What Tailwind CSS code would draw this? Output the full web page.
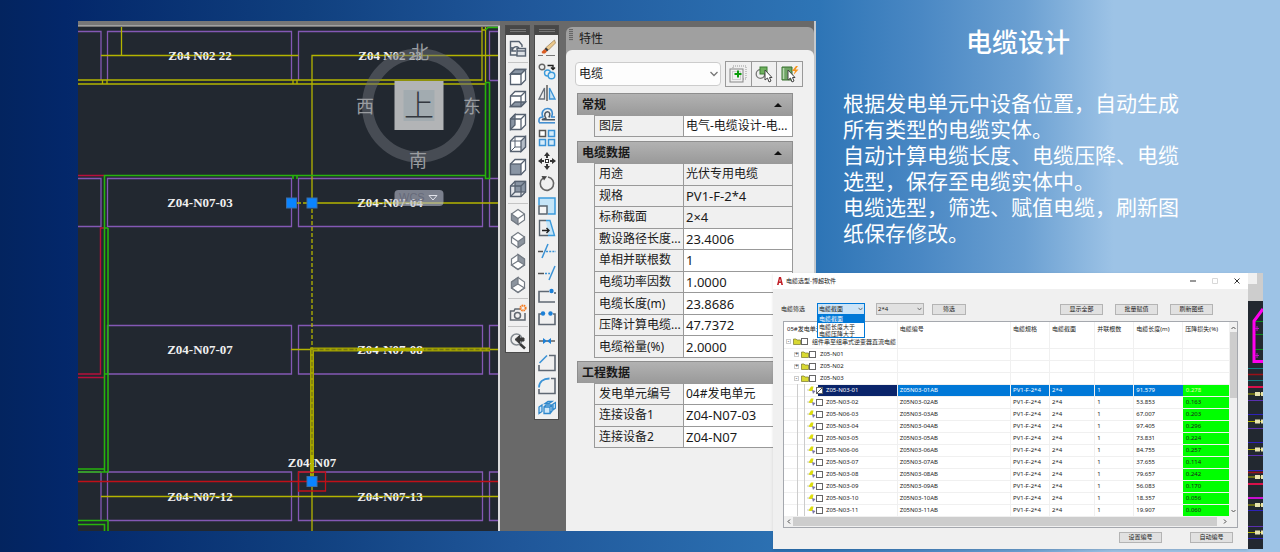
<!DOCTYPE html>
<html lang="zh-CN">
<head>
    <meta charset="UTF-8">
    <meta name="viewport" content="width=device-width, initial-scale=1.0">
    <title>电缆设计</title>
    <script src="https://cdn.jsdelivr.net/npm/@tailwindcss/browser@4"></script>
</head>
<body class="font-['Noto_Sans','Noto_Sans_CJK_SC',sans-serif] text-[#1a1a1a]">
    <main class="relative min-h-screen overflow-hidden flex pl-[78px] pt-[21px] bg-[linear-gradient(90deg,#03245f_0%,#03276a_5%,#10407f_24%,#1f5699_40%,#2e75b6_64%,#4a88c4_72%,#6ba0d2_80%,#9dc3e6_87%)]">

        <!-- CAD window -->
        <section class="shrink-0 w-[738px] h-[510px] flex bg-[#696969] border-r-2 border-[#c4c8cc]">
            <svg class="shrink-0 w-[422px] h-[510px]" viewBox="78 21 422 510" role="img" aria-label="CAD">
                <rect x="78" y="21" width="422" height="6" fill="#777"/>
                <rect x="78" y="25" width="422" height="1" fill="#a0a0a0"/>
                <rect x="78" y="27" width="420" height="504" fill="#222830"/>
                <rect x="498" y="26" width="2" height="505" fill="#dcdcdc"/>
                <!-- panel outlines -->
                <g fill="none" stroke="#8458b4" stroke-width="1.3">
                    <path d="M78 31.5H101V80M107.5 80V31.5H291.5V80M298.5 80V31.5H482M489.5 80V31.5H498M489.5 80.500H498"/>
                    <path d="M78 178.500H101V226.500H78M107.500 178.500H291.500V226.500H107.500ZM298.500 178.500H482.500V226.500H298.500ZM498 178.500H489.500V226.500H498"/>
                    <path d="M107.500 325.500H291.500V374H107.500ZM298.500 325.500H482.500V374H298.500ZM498 325.500H489.500V374H498"/>
                    <path d="M101 472V520.500M78 472H101M107.500 472H291.500V520.500H107.500ZM298.500 472H482.500V520.500H298.500ZM498 472H489.500V520.500H498"/>
                </g>
                <!-- cable trays -->
                <g fill="none" stroke="#b4b400" stroke-width="1.3">
                    <path d="M78 80H482V27M78 84H485.500V27M102.500 80V84M107 80V84M293 80V84M297 80V84M482 30H486"/>
                    <path d="M121.500 27V55.500M101 55.500H298.500M498 55.500H312V203H498"/>
                    <path d="M291 203H312" stroke-dasharray="4 2"/>
                    <path d="M312 203V350" stroke-dasharray="4 2"/>
                    <path d="M291 349.500H498M312 350V531M101 496.500H498"/>
                    <path d="M312 480V349.500H490" stroke-width="4" stroke="#a3a300"/>
                    <path d="M312 480V349.500H490" stroke-dasharray="4 2" stroke="#777712"/>
                </g>
                <g fill="none" stroke="#b80f3b" stroke-width="1.400">
                    <path d="M78 175.500H104M104 228H100.500V374H78M78 377.500H104"/>
                </g>
                <g fill="none" stroke="#27b30c" stroke-width="1.600">
                    <path d="M104.500 472V175.500H486M108 228V472H78M104 228H108M78 469H104.500M293 175V179M297 175V179M104 374H108"/>
                    <path d="M78 520.500H108V531M78 524.500H104.500V531M498 27.500H488L485.500 30M485.500 83V178.500H489.500V82.500H485"/>
                </g>
                <path d="M78 481.500H498M298.500 472H325.500V491H298.500Z" fill="none" stroke="#c01018" stroke-width="1.300"/>
                <!-- panel numbers -->
                <g class="font-['Liberation_Serif',serif] text-[13px] font-bold" fill="#f0f0f0" text-anchor="middle">
                    <text x="200" y="60">Z04 N02 22</text>
                    <text x="390" y="60">Z04 N02 23</text>
                    <text x="200" y="207">Z04-N07-03</text>
                    <text x="390" y="207">Z04-N07-04</text>
                    <text x="200" y="354">Z04-N07-07</text>
                    <text x="390" y="354">Z04-N07-08</text>
                    <text x="200" y="501">Z04-N07-12</text>
                    <text x="390" y="501">Z04-N07-13</text>
                    <text x="312" y="467">Z04-N07</text>
                </g>
                <g fill="none" stroke="#b4b400">
                    <path d="M166 55.500H234M357 55.500H424M357 203H424M166 496.500H234M357 496.500H424" opacity=".45"/>
                    <path d="M357 349.500H424" stroke-width="3"/>
                    <path d="M312 455V472" stroke-width="3"/>
                </g>
                <!-- grips -->
                <g fill="#0a84ff" stroke="#3b6ea8">
                    <rect x="286.500" y="198" width="10" height="10"/>
                    <rect x="307" y="198" width="10" height="10"/>
                    <rect x="307" y="476.500" width="10" height="10"/>
                </g>
                <!-- view cube -->
                <circle cx="419" cy="105.500" r="51.500" fill="none" stroke="#6b7077" stroke-opacity=".5" stroke-width="11"/>
                <rect x="394.500" y="81" width="49" height="49" fill="#b2b4b6"/>
                <rect x="403.500" y="90" width="31" height="31" fill="#a2abb0"/>
                <g class="font-['Noto_Sans_CJK_SC',sans-serif] text-[18px]" fill="#9a9da1" text-anchor="middle">
                    <text x="420" y="59">北</text>
                    <text x="418" y="167">南</text>
                    <text x="365" y="113">西</text>
                    <text x="472" y="113">东</text>
                    <text class="text-[30px] font-light" x="419" y="116" fill="#33383f">上</text>
                </g>
                <rect x="394.500" y="190" width="49" height="16" rx="4" fill="#b8bacb" fill-opacity=".6"/>
                <text class="font-['Liberation_Sans',sans-serif] text-[11px]" x="399" y="201" fill="#666a7a">WCS</text>
                <path d="M429 195.500H437L433 200Z" fill="none" stroke="#e2e3ea"/>
            </svg>

            <!-- Toolbars -->
            <div class="shrink-0 w-[66px] flex items-start gap-1 pt-1 pl-[5px]">
                <div class="w-[25px] h-[328px] bg-[#f0f0f0] border border-[#4a4a4a] flex flex-col items-center justify-between pb-[2px]">
                    <div class="w-full h-[9px] bg-[#474747] flex flex-col items-center justify-center gap-px">
                        <span class="w-4 h-px bg-[#777]"></span><span class="w-4 h-px bg-[#777]"></span>
                    </div>
                    <button aria-label="视图管理器"><svg class="w-[18px] h-[18px]" viewBox="0 0 18 18" fill="none" stroke="#566170" stroke-width="1.400"><path d="M8 15H1.500V1.500H10L13 5V7M3 11C4 6 8 6 10 8M3 7V11H7"/><rect x="8" y="8.500" width="8.500" height="7.500" fill="#dde1e6"/><path d="M8 11H16.500"/></svg></button>
                    <hr class="w-5 border-[#c4c4c4]">
                    <button aria-label="俯视"><svg class="w-[18px] h-[18px]" viewBox="0 0 18 18" fill="#fff" stroke="#566170" stroke-width="1.300"><path d="M1.500 6L6 1.500H16.500V12L12 16.500H1.500Z"/><path d="M1.500 6L6 1.500H16.500L12 6Z" fill="#8995a4"/><path d="M12 6V16.500M1.500 6H12" fill="none"/></svg></button>
                    <button aria-label="仰视"><svg class="w-[18px] h-[18px]" viewBox="0 0 18 18" fill="#fff" stroke="#566170" stroke-width="1.300"><path d="M1.500 6L6 1.500H16.500V12L12 16.500H1.500Z"/><path d="M1.500 16.500L6 12H16.500L12 16.500Z" fill="#8995a4"/><path d="M12 16.500V6H1.500M12 6L16.500 1.500" fill="none"/></svg></button>
                    <button aria-label="左视"><svg class="w-[18px] h-[18px]" viewBox="0 0 18 18" fill="#fff" stroke="#566170" stroke-width="1.300"><path d="M1.500 6L6 1.500H16.500V12L12 16.500H1.500Z"/><path d="M1.500 6L6 1.500V12L1.500 16.500Z" fill="#8995a4"/><path d="M12 16.500V6H1.500M12 6L16.500 1.500" fill="none"/></svg></button>
                    <button aria-label="右视"><svg class="w-[18px] h-[18px]" viewBox="0 0 18 18" fill="#fff" stroke="#566170" stroke-width="1.300"><path d="M1.500 6L6 1.500H16.500V12L12 16.500H1.500Z"/><path d="M12 6L16.500 1.500V12L12 16.500Z" fill="#b4bcc6"/><path d="M12 6H1.500M6 2V12L2 16M6 12H12" fill="none" stroke-width="1"/></svg></button>
                    <button aria-label="前视"><svg class="w-[18px] h-[18px]" viewBox="0 0 18 18" fill="#fff" stroke="#566170" stroke-width="1.300"><path d="M1.500 6L6 1.500H16.500V12L12 16.500H1.500Z"/><rect x="1.500" y="6" width="10.500" height="10.500" fill="#8995a4"/><path d="M12 6L16.500 1.500"/></svg></button>
                    <button aria-label="后视"><svg class="w-[18px] h-[18px]" viewBox="0 0 18 18" fill="#e4e7eb" stroke="#566170" stroke-width="1.300"><path d="M1.500 6L6 1.500H16.500V12L12 16.500H1.500Z"/><rect x="6" y="1.500" width="10.500" height="10.500" fill="#8995a4"/><path d="M1.500 6H12V16.500M12 6L16.500 1.500M1.500 16.500L6 12" fill="none"/></svg></button>
                    <hr class="w-5 border-[#c4c4c4]">
                    <button aria-label="西南等轴测"><svg class="w-[18px] h-[18px]" viewBox="0 0 18 18" fill="#fff" stroke="#747b84" stroke-width="1.200"><path d="M2.500 6L9 1.500L15.500 6V12L9 16.500L2.500 12Z"/><path d="M2.500 6L9 10.500V16.500L2.500 12Z" fill="#8c949e"/><path d="M9 10.500L15.500 6"/></svg></button>
                    <button aria-label="东南等轴测"><svg class="w-[18px] h-[18px]" viewBox="0 0 18 18" fill="#fff" stroke="#747b84" stroke-width="1.200"><path d="M2.500 6L9 1.500L15.500 6V12L9 16.500L2.500 12Z"/><path d="M15.500 6L9 10.500V16.500L15.500 12Z" fill="#8c949e"/><path d="M9 10.500L2.500 6"/></svg></button>
                    <button aria-label="东北等轴测"><svg class="w-[18px] h-[18px]" viewBox="0 0 18 18" fill="#fff" stroke="#747b84" stroke-width="1.200"><path d="M2.500 6L9 1.500L15.500 6V12L9 16.500L2.500 12Z"/><path d="M9 1.500L15.500 6V12L9 8Z" fill="#8c949e"/><path d="M9 8L2.500 12L9 16.500L15.500 12" fill="none"/></svg></button>
                    <button aria-label="西北等轴测"><svg class="w-[18px] h-[18px]" viewBox="0 0 18 18" fill="#fff" stroke="#747b84" stroke-width="1.200"><path d="M2.500 6L9 1.500L15.500 6V12L9 16.500L2.500 12Z"/><path d="M9 1.500L2.500 6V12L9 8Z" fill="#8c949e"/><path d="M9 8L15.500 12L9 16.500L2.500 12" fill="none"/></svg></button>
                    <hr class="w-5 border-[#c4c4c4]">
                    <button aria-label="创建相机"><svg class="w-[18px] h-[18px]" viewBox="0 0 18 18" fill="none" stroke="#606870" stroke-width="1.500"><path d="M11 5H6L5 7H1.500V16H16V9"/><circle cx="8.500" cy="11.500" r="3"/><circle cx="14" cy="4" r="2.600" stroke="#f47b20" stroke-width="2" stroke-dasharray="1.500 .6"/></svg></button>
                    <hr class="w-5 border-[#c4c4c4]">
                    <button aria-label="上一个视图"><svg class="w-[18px] h-[18px]" viewBox="0 0 18 18" fill="none" stroke="#3a3a3a"><circle cx="7.500" cy="7.500" r="5.500" stroke="#858b91" stroke-width="1.500"/><path d="M11 12L16 16.500" stroke-width="2.600"/><path d="M6 7.500L10.500 3.500V6H15V9H10.500V11.500Z" fill="#3a3a3a"/></svg></button>
                </div>
                <div class="w-[25px] h-[395px] bg-[#f0f0f0] border border-[#4a4a4a] flex flex-col items-center justify-between pb-[2px]">
                    <div class="w-full h-[9px] bg-[#474747] flex flex-col items-center justify-center gap-px">
                        <span class="w-4 h-px bg-[#777]"></span><span class="w-4 h-px bg-[#777]"></span>
                    </div>
                    <button aria-label="删除"><svg class="w-[18px] h-[18px]" viewBox="0 0 18 18"><path d="M16.500 1L8 8.500L10.500 11L17.500 4Z" fill="#ecc98c" stroke="#8a6d45" stroke-width=".6"/><path d="M8 8.500L10.500 11L9 12.500L6.500 10Z" fill="#333"/><path d="M6.500 10L9 12.500L7 14.500H4.500L3.500 13Z" fill="#d95b22"/><path d="M0 16.500H5M8 16.500H17" stroke="#777"/></svg></button>
                    <button aria-label="复制"><svg class="w-[18px] h-[18px]" viewBox="0 0 18 18" fill="none" stroke-width="1.400"><circle cx="4" cy="5" r="2.800" stroke="#666"/><path d="M9.500 3.500H15V7M13 5.500L15 7.500L17 5.500" stroke="#222"/><circle cx="9.500" cy="11" r="3" stroke="#3b9bdc"/><circle cx="13.500" cy="13.500" r="3.300" stroke="#3b9bdc" fill="#d5ecfa"/></svg></button>
                    <button aria-label="镜像"><svg class="w-[18px] h-[18px]" viewBox="0 0 18 18" fill="none" stroke-width="1.300"><path d="M6.500 4V15H1Z" stroke="#666e78"/><path d="M9 1V17" stroke="#444"/><path d="M11.500 4V15H17Z" stroke="#3b93d6" fill="#c5e2f5"/></svg></button>
                    <button aria-label="偏移"><svg class="w-[18px] h-[18px]" viewBox="0 0 18 18" fill="none" stroke-linejoin="round"><path d="M1 15.500V13C1 11 3 10 5 10C2.500 5 6 1.500 9.500 1.500C14 1.500 15.500 6 13.500 10H17" stroke="#3b8bd0" stroke-width="1.600"/><path d="M17 12.800H4.500C4 11.500 6 12.500 8 11.500C5.500 8 7 4.800 9.500 4.800C12 4.800 12.500 8 10.800 10.500" stroke="#4a5560" stroke-width="1.500"/><path d="M1 15.800H17" stroke="#3b8bd0" stroke-width="1.500"/></svg></button>
                    <button aria-label="阵列"><svg class="w-[18px] h-[18px]" viewBox="0 0 18 18" fill="#d6ecfa" stroke="#3b93d6" stroke-width="1.500"><rect x="1.500" y="1.500" width="6" height="6" fill="#fff" stroke="#555"/><rect x="10.500" y="1.500" width="6" height="6"/><rect x="1.500" y="10.500" width="6" height="6"/><rect x="10.500" y="10.500" width="6" height="6"/></svg></button>
                    <button aria-label="移动"><svg class="w-[18px] h-[18px]" viewBox="0 0 18 18" fill="#333"><path d="M9 0L12 4H10V6H8V4H6ZM9 18L12 14H10V12H8V14H6ZM0 9L4 6V8H6V10H4V12ZM18 9L14 6V8H12V10H14V12Z"/><rect x="7.500" y="7.500" width="3" height="3" fill="#fff" stroke="#333"/></svg></button>
                    <button aria-label="旋转"><svg class="w-[18px] h-[18px]" viewBox="0 0 18 18" fill="none" stroke="#666" stroke-width="1.600"><path d="M5 4.200A6.700 6.700 0 1 0 10 3"/><path d="M3.500 2L9 2.200L6 6.500Z" fill="#444" stroke="none"/></svg></button>
                    <button aria-label="缩放"><svg class="w-[18px] h-[18px]" viewBox="0 0 18 18" stroke-width="1.500"><path d="M1 8V1H17V17H10" fill="#c5e5f8" stroke="#3b9bdc"/><rect x="1" y="9" width="8" height="8" fill="#f5f5f5" stroke="#5a646e"/></svg></button>
                    <button aria-label="拉伸"><svg class="w-[18px] h-[18px]" viewBox="0 0 18 18" stroke-width="1.400"><path d="M8 1.500H12L16.500 16.500H10" fill="#c5e5f8" stroke="#3b9bdc"/><path d="M8 1.500H1.500V16.500H10" fill="none" stroke="#5a646e"/><path d="M4 11.500H11M8.500 9L11 11.500L8.500 14" fill="none" stroke="#222"/></svg></button>
                    <button aria-label="修剪"><svg class="w-[18px] h-[18px]" viewBox="0 0 18 18" fill="none" stroke-width="1.500"><path d="M0 9.500H5" stroke="#555"/><path d="M4 16L10 2" stroke="#3b93d6"/><path d="M8 9.500H18" stroke="#3b93d6" stroke-dasharray="2 1.200"/></svg></button>
                    <button aria-label="延伸"><svg class="w-[18px] h-[18px]" viewBox="0 0 18 18" fill="none" stroke-width="1.500"><path d="M0 9.500H6" stroke="#555"/><path d="M11 16L17 2" stroke="#3b93d6"/><path d="M7 9.500H12" stroke="#3b93d6" stroke-dasharray="2 1.200"/></svg></button>
                    <button aria-label="打断于点"><svg class="w-[18px] h-[18px]" viewBox="0 0 18 18" fill="none" stroke="#5f6873" stroke-width="1.600"><path d="M11 4.500H1V15H17M17 7V5"/><circle cx="13.500" cy="4" r="2.200" fill="#1b7fd6" stroke="none"/></svg></button>
                    <button aria-label="打断"><svg class="w-[18px] h-[18px]" viewBox="0 0 18 18" fill="none" stroke="#5f6873" stroke-width="1.600"><path d="M3 5H1V15.500H17V5H15"/><circle cx="5" cy="4.500" r="2.200" fill="#1b7fd6" stroke="none"/><circle cx="12.500" cy="4.500" r="2.200" fill="#1b7fd6" stroke="none"/></svg></button>
                    <button aria-label="合并"><svg class="w-[18px] h-[18px]" viewBox="0 0 18 18"><path d="M1 9H17" stroke="#555" stroke-width="1.400"/><path d="M5 6L9 9L5 12ZM13 6L9 9L13 12Z" fill="#1b7fd6"/></svg></button>
                    <button aria-label="倒角"><svg class="w-[18px] h-[18px]" viewBox="0 0 18 18" fill="none" stroke="#5f6873" stroke-width="1.600"><path d="M1 11V16.500H17V1.500H11"/><path d="M1.500 9L9 1.500" stroke="#3b93d6"/></svg></button>
                    <button aria-label="圆角"><svg class="w-[18px] h-[18px]" viewBox="0 0 18 18" fill="none" stroke="#5f6873" stroke-width="1.600"><path d="M1 12V16.500H17V1.500H13"/><path d="M1 10.500C1 5 5 1.500 11.500 1.500" stroke="#3b93d6" stroke-width="1.800"/></svg></button>
                    <button aria-label="分解"><svg class="w-[18px] h-[18px]" viewBox="0 0 18 18" fill="#cfe7f8" stroke="#2f88cc" stroke-width="1.300"><path d="M6 8H12V14.500H6ZM6 8L8 6H14L12 8M14 6V12L12 14.500"/><path d="M1 8L4 6V12.500L1 14.500ZM7 4.500L10 2.500H14L11 4.500ZM15 5L17.500 3.500V9L15 11Z"/></svg></button>
                </div>
            </div>

            <!-- Properties palette -->
            <aside class="grow mt-[6px] bg-[#a0a0a0] rounded-t-md">
                <h2 class="h-[23px] flex items-center gap-[6px] pl-[3px] text-[12px]">
                    <span class="w-1 h-3 self-start mt-[2px] bg-[repeating-linear-gradient(#666_0_1px,#999_1px_2px)]"></span>特性
                </h2>
                <div class="h-[481px] bg-[#f0f0f0] rounded-t-md pt-[11px] pl-[9px]">
                    <div class="flex items-center gap-1 mb-[6px]">
                        <div class="relative">
                            <select aria-label="对象类型" class="block appearance-none w-[146px] h-6 bg-[#fdfdfd] border border-[#ccc] rounded-sm pl-[3px] text-[12px]"><option>电缆</option></select>
                            <svg class="absolute right-[3px] top-[9px] w-2 h-[6px]" viewBox="0 0 8 6" fill="none" stroke="#777" stroke-width="1.300"><path d="M.5 1L4 4.500L7.500 1"/></svg>
                        </div>
                        <div class="flex h-[26px] w-[78px] border border-[#999] divide-x divide-[#999]">
                            <button class="grow grid place-items-center" aria-label="切换 PICKADD"><svg class="w-[18px] h-[18px]" viewBox="0 0 18 18" fill="none"><rect x="4" y="1" width="13" height="13" stroke="#999" stroke-dasharray="1 1"/><rect x="1" y="4" width="13" height="13" fill="#f0f0f0" stroke="#888"/><rect x="3.500" y="6.500" width="8" height="8" stroke="#aaa" stroke-dasharray="1 1"/><path d="M9 5.500V12.500M5.500 9H12.500" stroke="#0a9c0a" stroke-width="2"/></svg></button>
                            <button class="grow grid place-items-center" aria-label="选择对象"><svg class="w-[18px] h-[18px]" viewBox="0 0 18 18"><circle cx="5.500" cy="9" r="4.300" fill="none" stroke="#777" stroke-width="1.300"/><rect x="5" y="2" width="7" height="7" fill="#6fb05e" stroke="#3b7d33"/><path d="M10 5V15L12.500 13L14 17L16 16L14.500 12.500H17Z" fill="#fff" stroke="#444"/></svg></button>
                            <button class="grow grid place-items-center" aria-label="快速选择"><svg class="w-[18px] h-[18px]" viewBox="0 0 18 18"><path d="M1 2H11V15H1Z" fill="#6fa565" stroke="#38702f"/><path d="M2.500 3V14" stroke="#b9d8b2" stroke-width="1.500"/><path d="M7 5V15L9.500 13L11 17L13 16L11.500 12.500H14Z" fill="#fff" stroke="#444"/><path d="M15 1L11 6H14L12.500 10L17.500 4.500H14.500L17 1Z" fill="#f7941d"/></svg></button>
                        </div>
                    </div>
                    <div class="w-[216px] ml-[2px]">
                        <h3 class="h-[22px] flex items-center justify-between pl-1 pr-[10px] text-[12px] font-bold border border-b-0 border-[#8e8e8e] bg-linear-to-b from-[#b2b2b2] to-[#9a9a9a]">常规<svg class="w-2 h-1" viewBox="0 0 8 4"><path d="M0 4L4 0L8 4Z" fill="#111"/></svg></h3>
                        <table class="table-fixed w-[199px] h-[22px] ml-[17px] mb-1 border-collapse text-[12px] leading-4 whitespace-nowrap">
                            <tbody id="general"></tbody>
                        </table>
                        <h3 class="h-[22px] flex items-center justify-between pl-1 pr-[10px] text-[12px] font-bold border border-b-0 border-[#8e8e8e] bg-linear-to-b from-[#b2b2b2] to-[#9a9a9a]">电缆数据<svg class="w-2 h-1" viewBox="0 0 8 4"><path d="M0 4L4 0L8 4Z" fill="#111"/></svg></h3>
                        <table class="table-fixed w-[199px] h-[195px] ml-[17px] mb-[3px] border-collapse text-[12px] leading-4 whitespace-nowrap">
                            <tbody id="cable"></tbody>
                        </table>
                        <h3 class="h-[22px] flex items-center justify-between pl-1 pr-[10px] text-[12px] font-bold border border-b-0 border-[#8e8e8e] bg-linear-to-b from-[#b2b2b2] to-[#9a9a9a]">工程数据<svg class="w-2 h-1" viewBox="0 0 8 4"><path d="M0 4L4 0L8 4Z" fill="#111"/></svg></h3>
                        <table class="table-fixed w-[199px] h-[65px] ml-[17px] border-collapse text-[12px] leading-4 whitespace-nowrap">
                            <tbody id="project"></tbody>
                        </table>
                    </div>
                </div>
            </aside>
        </section>

        <!-- Description -->
        <article class="grow pl-[27px] pt-1 text-white font-['Noto_Sans_CJK_SC',sans-serif]">
            <h1 class="w-[350px] text-center text-[26px] leading-[32px] font-medium mb-8">电缆设计</h1>
            <div class="w-[344px] text-[21px] leading-[26px]">
                <p>根据发电单元中设备位置，自动生成所有类型的电缆实体。</p>
                <p>自动计算电缆长度、电缆压降、电缆选型，保存至电缆实体中。</p>
                <p>电缆选型，筛选、赋值电缆，刷新图纸保存修改。</p>
            </div>
        </article>

        <!-- Cable selection window, floating over the drawing -->
        <div class="absolute left-[773px] top-[273px] flex text-[6px] leading-[8px]">
            <section class="w-[475px] h-[276px] bg-[#f0f0f0] shadow-sm">
                <header class="h-4 bg-white flex items-center pl-1 pr-2 gap-[3px]">
                    <svg class="w-[6px] h-2" viewBox="0 0 6 8"><path d="M0 8L2 0H4L6 8H4.300L4 6H2L1.700 8ZM2.300 4.500H3.700L3 1.800Z" fill="#c01c24"/></svg>
                    <h2 class="grow">电缆选型-博超软件</h2>
                    <div class="flex items-center gap-4">
                        <button aria-label="最小化"><svg class="w-[6px] h-[6px]" viewBox="0 0 6 6"><path d="M0 3H6" stroke="#333"/></svg></button>
                        <button aria-label="最大化"><svg class="w-[6px] h-[6px]" viewBox="0 0 6 6"><path d="M.5 .5H5.500V5.500H.5Z" fill="none" stroke="#d8d8d8"/></svg></button>
                        <button aria-label="关闭"><svg class="w-[6px] h-[6px]" viewBox="0 0 6 6"><path d="M.5 .5L5.500 5.500M5.500 .5L.5 5.500" stroke="#333"/></svg></button>
                    </div>
                </header>
                <div class="flex items-center h-[32px] pl-2 pr-[35px] pt-2">
                    <label for="filterBy" class="w-9">电缆筛选</label>
                    <div class="relative mr-[11px] text-[6px]">
                        <select id="filterBy" class="block appearance-none w-12 h-3 bg-[#cce4f7] border border-[#0078d7] pl-px"><option>电缆截面</option><option>电缆长度大于</option><option>电缆压降大于</option></select>
                        <svg class="absolute right-[2px] top-1 w-[5px] h-1" viewBox="0 0 5 4" fill="none" stroke="#555" stroke-width=".8"><path d="M.5 .8L2.500 3L4.500 .8"/></svg>
                        <ul class="absolute z-10 top-[11px] left-0 w-12 bg-white border border-[#0078d7]">
                            <li class="h-2 pl-px bg-[#0078d7] text-white">电缆截面</li>
                            <li class="h-[7px] pl-px">电缆长度大于</li>
                            <li class="h-[7px] pl-px">电缆压降大于</li>
                        </ul>
                    </div>
                    <div class="relative mr-2">
                        <select aria-label="截面" class="block appearance-none w-12 h-3 bg-[#e1e1e1] border border-[#b4b4b4] pl-px"><option>2*4</option></select>
                        <svg class="absolute right-[2px] top-1 w-[5px] h-1" viewBox="0 0 5 4" fill="none" stroke="#555" stroke-width=".8"><path d="M.5 .8L2.500 3L4.500 .8"/></svg>
                    </div>
                    <button class="w-[34px] h-[11px] bg-[#e1e1e1] border border-[#b4b4b4]">筛选</button>
                    <div class="ml-auto flex gap-3">
                        <button class="w-[43px] h-[11px] bg-[#e1e1e1] border border-[#b4b4b4]">显示全部</button>
                        <button class="w-[43px] h-[11px] bg-[#e1e1e1] border border-[#b4b4b4]">批量赋值</button>
                        <button class="w-[43px] h-[11px] bg-[#e1e1e1] border border-[#b4b4b4]">刷新图纸</button>
                    </div>
                </div>
                <div class="mx-[10px] bg-white border border-[#a5a8ae]">
                    <div class="flex">
                        <table class="table-fixed grow w-[444px] border-collapse text-left whitespace-nowrap">
                            <colgroup><col class="w-[113px]"><col class="w-[113px]"><col class="w-[39px]"><col class="w-[45px]"><col class="w-[39px]"><col class="w-[49px]"><col class="w-[46px]"></colgroup>
                            <thead>
                                <tr class="h-[14px]">
                                    <th class="p-0 pl-[3px] font-normal">05#发电单元</th>
                                    <th class="p-0 pl-[2px] font-normal border-l border-[#f0f0f0]">电缆编号</th>
                                    <th class="p-0 pl-[2px] font-normal border-l border-[#f0f0f0]">电缆规格</th>
                                    <th class="p-0 pl-[2px] font-normal border-l border-[#f0f0f0]">电缆截面</th>
                                    <th class="p-0 pl-[2px] font-normal border-l border-[#f0f0f0]">并联根数</th>
                                    <th class="p-0 pl-[2px] font-normal border-l border-[#f0f0f0]">电缆长度(m)</th>
                                    <th class="p-0 pl-[2px] font-normal border-l border-[#f0f0f0]">压降损失(%)</th>
                                </tr>
                            </thead>
                            <tbody id="cables"></tbody>
                        </table>
                        <div class="w-2 bg-[#f0f0f0] flex flex-col items-center py-1">
                            <svg class="w-[5px] h-1" viewBox="0 0 5 4" fill="none" stroke="#555"><path d="M.5 3L2.500 1L4.500 3"/></svg>
                            <div class="w-[7px] h-[66px] mt-[2px] bg-[#cdcdcd]"></div>
                            <svg class="w-[5px] h-1 mt-auto" viewBox="0 0 5 4" fill="none" stroke="#555"><path d="M.5 1L2.500 3L4.500 1"/></svg>
                        </div>
                    </div>
                    <div class="h-[10px] bg-[#f0f0f0] flex items-center pl-[3px] pr-[10px]">
                        <svg class="w-1 h-[5px] mr-[2px]" viewBox="0 0 4 5" fill="none" stroke="#444"><path d="M3 .5L1 2.500L3 4.500"/></svg>
                        <div class="grow h-[9px] bg-[#cdcdcd]"></div>
                        <svg class="w-1 h-[5px] ml-[6px]" viewBox="0 0 4 5" fill="none" stroke="#444"><path d="M1 .5L3 2.500L1 4.500"/></svg>
                    </div>
                </div>
                <footer class="flex justify-end gap-7 pt-1 pr-[15px]">
                    <button class="w-[43px] h-[11px] bg-[#e1e1e1] border border-[#b4b4b4]">设置编号</button>
                    <button class="w-[43px] h-[11px] bg-[#e1e1e1] border border-[#b4b4b4]">自动编号</button>
                </footer>
            </section>
            <svg class="w-[15px] h-[276px]" viewBox="1248 273 15 276" fill="none">
                <rect x="1248" y="273" width="15" height="276" fill="#222830"/>
                <rect x="1248" y="273" width="15" height="28" fill="#cdcdcd"/>
                <rect x="1248" y="273" width="9" height="11" fill="#f0f0f0"/>
                <path d="M1254 321.500H1263M1254 334.500H1263M1254 349.500H1263" stroke="#0c8a1c"/>
                <path d="M1263 309L1254 321V361.500H1263" stroke="#f0e" stroke-width="3"/>
                <path d="M1255 328.500H1259M1257 326V331M1255 355.500H1259M1257 353V358" stroke="#c010c8"/>
                <path d="M1248 368.500H1263M1248 380.500H1263" stroke="#147c80"/>
                <path d="M1248 374.500H1263M1248 472.500H1263" stroke="#9a1018" stroke-width="1.500"/>
                <path d="M1248 387H1263M1248 484H1263" stroke="#d8104a" stroke-width="2"/>
                <path d="M1248 498H1263" stroke="#c80fd0" stroke-width="2"/>
                <path d="M1248 400.500H1263M1248 428.500H1263M1248 455.500H1263M1248 526.500H1263" stroke="#5a30b0"/>
                <path d="M1248 414.500H1263M1248 442.500H1263M1248 470.500H1263M1248 510.500H1263M1248 538.500H1263" stroke="#2d22b8"/>
                <path d="M1248 394H1263M1248 421.500H1263M1248 449.500H1263M1248 477H1263M1248 505H1263M1248 532.500H1263" stroke="#b4b400"/>
                <path d="M1255 394H1263M1255 421.500H1263M1255 449.500H1263M1255 477H1263M1255 505H1263M1255 532.500H1263" stroke="#e8e4b0" stroke-width="4" stroke-dasharray="5 1"/>
            </svg>
        </div>
    </main>

    <script>
        // [label, value, read-only]
        const general = [['图层', '电气-电缆设计-电...']];
        const cable = [
            ['用途', '光伏专用电缆', true],
            ['规格', 'PV1-F-2*4', true],
            ['标称截面', '2×4', true],
            ['敷设路径长度...', '23.4006'],
            ['单相并联根数', '1'],
            ['电缆功率因数', '1.0000'],
            ['电缆长度(m)', '23.8686'],
            ['压降计算电缆...', '47.7372'],
            ['电缆裕量(%)', '2.0000']
        ];
        const project = [
            ['发电单元编号', '04#发电单元'],
            ['连接设备1', 'Z04-N07-03'],
            ['连接设备2', 'Z04-N07']
        ];

        function fillProperties(id, rows) {
            document.getElementById(id).innerHTML = rows.map(([label, value, readOnly]) => `
                <tr>
                    <th class="w-[89px] p-0 pl-1 text-left font-normal border border-[#999]">${label}</th>
                    <td class="p-0 pl-[2px] border border-[#999] ${readOnly ? 'bg-[#f0f0f0]' : 'bg-white'} ${/[一-龥]/.test(value) ? '' : 'text-[13px]'}">${value}</td>
                </tr>`).join('');
        }

        fillProperties('general', general);
        fillProperties('cable', cable);
        fillProperties('project', project);

        // Cable tree
        const folderIcon = '<svg class="w-2 h-[7px]" viewBox="0 0 8 7"><path d="M.5 6.500V1H3L4 2H7.500V6.500Z" fill="#d9d932" stroke="#77772a" stroke-width=".7"/></svg>';
        const cableIcon = '<svg class="w-[9px] h-2" viewBox="0 0 9 8"><path d="M0 4H3" stroke="#aaa" stroke-width=".6"/><path d="M1.500 4.500L4 .5H6.500L5.500 5H3Z" fill="#dcdc10"/><path d="M5 4L8.500 5L6 8Z" fill="#7a76a8"/></svg>';
        const expander = sign => `<span class="w-[5px] h-[5px] border border-[#ccc] text-[6px] leading-[3px] text-center mr-[2px]">${sign}</span>`;
        const checkbox = (name, checked) => `<input type="checkbox" aria-label="${name}" ${checked ? 'checked' : ''} class="appearance-none w-[7px] h-[7px] bg-white border border-[#666] checked:bg-[linear-gradient(135deg,#fff_45%,#555_45%_60%,#fff_60%)]">`;

        const folders = [
            ['组件串至组串式逆变器直流电缆', '-', 'pl-[2px]'],
            ['Z05-N01', '+', 'pl-[10px]'],
            ['Z05-N02', '+', 'pl-[10px]'],
            ['Z05-N03', '-', 'pl-[10px]']
        ];
        const cables = [
            ['Z05-N03-01', 'Z05N03-01AB', '91.579', '0.278'],
            ['Z05-N03-02', 'Z05N03-02AB', '53.853', '0.163'],
            ['Z05-N06-03', 'Z05N03-03AB', '67.007', '0.203'],
            ['Z05-N03-04', 'Z05N03-04AB', '97.405', '0.296'],
            ['Z05-N03-05', 'Z05N03-05AB', '73.831', '0.224'],
            ['Z05-N06-06', 'Z05N03-06AB', '84.755', '0.257'],
            ['Z05-N03-07', 'Z05N03-07AB', '37.655', '0.114'],
            ['Z05-N03-08', 'Z05N03-08AB', '79.657', '0.242'],
            ['Z05-N03-09', 'Z05N03-09AB', '56.083', '0.170'],
            ['Z05-N03-10', 'Z05N03-10AB', '18.357', '0.056'],
            ['Z05-N03-11', 'Z05N03-11AB', '19.907', '0.060']
        ];

        const cell = text => `<td class="p-0 pl-[2px] border-l border-[#f0f0f0]">${text}</td>`;

        const folderRows = folders.map(([name, sign, pad]) => `
            <tr class="h-3 border-b border-[#f0f0f0]">
                <td class="p-0"><div class="flex items-center ${pad}">${expander(sign)}${folderIcon}${checkbox(name, false)}<span class="pl-1">${name}</span></div></td>
                ${cell('').repeat(6)}
            </tr>`);

        const cableRows = cables.map(([name, code, length, loss], i) => `
            <tr class="h-3 border-b border-[#f0f0f0] ${i === 0 ? 'bg-[#0078d7] text-white' : ''}">
                <td class="p-0 ${i === 0 ? 'bg-[linear-gradient(90deg,#fff_34px,#0a246a_34px)]' : ''}"><div class="flex items-center ml-[13px] pl-[10px] relative">
                    <span class="absolute left-0 -top-[2px] h-3 w-2 border-x border-[#ccc]"></span>${cableIcon}${checkbox(name, i === 0)}<span class="pl-[3px]">${name}</span></div></td>
                ${cell(code)}${cell('PV1-F-2*4')}${cell('2*4')}${cell('1')}${cell(length)}
                <td class="p-0 pl-[3px] bg-[#00ff00] ${i === 0 ? 'text-[#e8ffb0]' : ''}">${loss}</td>
            </tr>`);

        document.getElementById('cables').innerHTML = folderRows.concat(cableRows).join('');
    </script>
</body>
</html>
